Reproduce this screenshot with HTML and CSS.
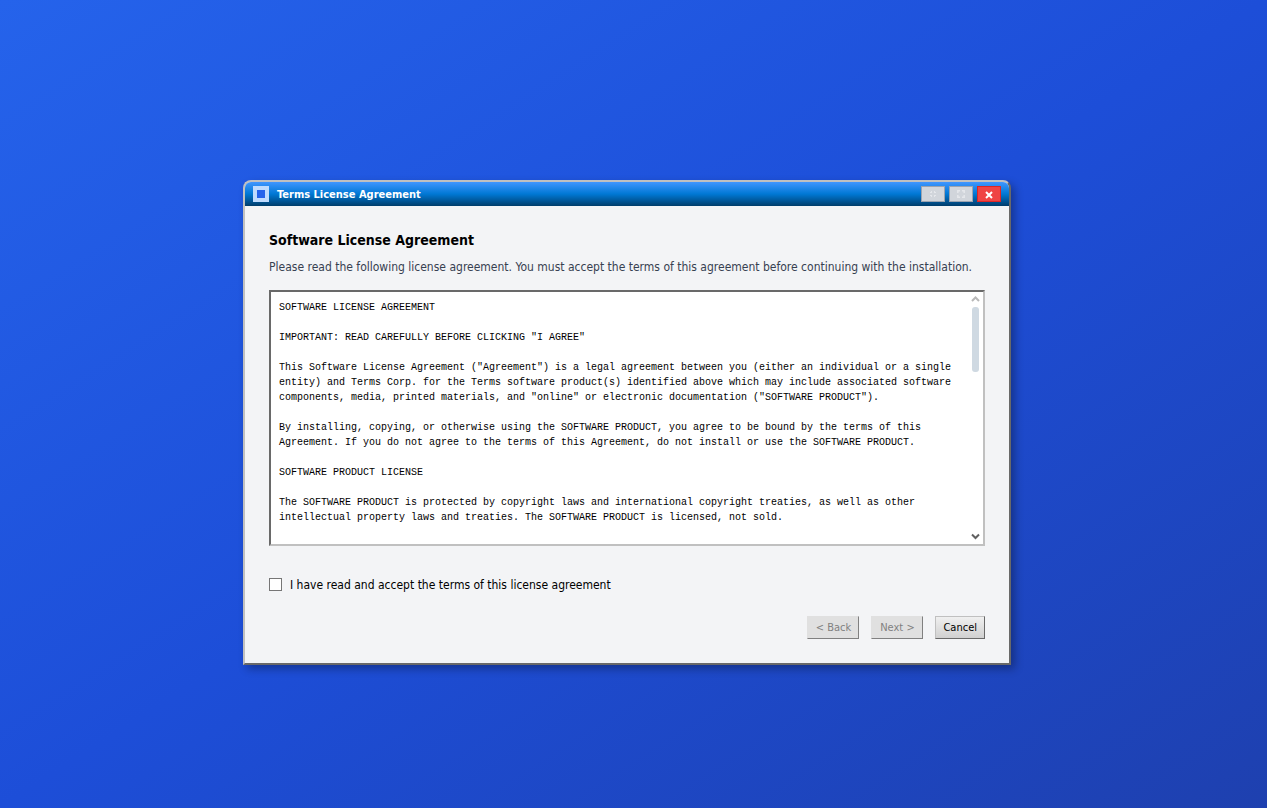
FILE: index.html
```
<!DOCTYPE html>
<html lang="en">
<head>
    <meta charset="UTF-8">
    <meta name="viewport" content="width=device-width, initial-scale=1.0">
    <title>Terms License Agreement</title>
    <link rel="stylesheet" href="styles.css">
</head>
<body>

    <main class="window">
        <header class="title-bar">
            <span class="app-icon"></span>
            <span class="window-title">Terms License Agreement</span>
            <div class="window-controls">
                <button type="button" aria-label="Minimize" disabled>
                    <svg width="6" height="6" viewBox="0 0 6 6" fill="none" stroke="#e5e7eb"><path d="M0 1.5h2M1.5 0v2M4.5 0v2M4 1.5h2M0 4.5h2M1.5 4v2M4.5 4v2M4 4.5h2"/></svg>
                </button>
                <button type="button" aria-label="Maximize" disabled>
                    <svg width="8" height="8" viewBox="0 0 8 8" fill="none" stroke="#e5e7eb" stroke-width="1.5"><path d="M.8 3V.8H3M5 .8h2.2V3M7.2 5v2.2H5M3 7.2H.8V5"/></svg>
                </button>
                <button type="button" class="close" aria-label="Close">
                    <svg width="8" height="8" viewBox="0 0 8 8" fill="none" stroke="#fff" stroke-width="2"><path d="M1 1l6 6M7 1L1 7"/></svg>
                </button>
            </div>
        </header>

        <div class="content">
            <h1>Software License Agreement</h1>
            <p class="intro">Please read the following license agreement. You must accept the terms of this agreement before continuing with the installation.</p>

            <div class="license-box">
                <div class="license-text" tabindex="0">
                    <p>SOFTWARE LICENSE AGREEMENT</p>
                    <p>IMPORTANT: READ CAREFULLY BEFORE CLICKING "I AGREE"</p>
                    <p>This Software License Agreement ("Agreement") is a legal agreement between you (either an individual or a single entity) and Terms Corp. for the Terms software product(s) identified above which may include associated software components, media, printed materials, and "online" or electronic documentation ("SOFTWARE PRODUCT").</p>
                    <p>By installing, copying, or otherwise using the SOFTWARE PRODUCT, you agree to be bound by the terms of this Agreement. If you do not agree to the terms of this Agreement, do not install or use the SOFTWARE PRODUCT.</p>
                    <p>SOFTWARE PRODUCT LICENSE</p>
                    <p>The SOFTWARE PRODUCT is protected by copyright laws and international copyright treaties, as well as other intellectual property laws and treaties. The SOFTWARE PRODUCT is licensed, not sold.</p>
                </div>
                <div class="scrollbar">
                    <svg width="9" height="7" viewBox="0 0 9 7" fill="none" stroke="#b8b8b8" stroke-width="2"><path d="M1 5L4.5 1.5 8 5"/></svg>
                    <span class="thumb"></span>
                    <svg class="down" width="9" height="7" viewBox="0 0 9 7" fill="none" stroke="#606060" stroke-width="2"><path d="M1 1.5L4.5 5 8 1.5"/></svg>
                </div>
            </div>

            <div class="accept-row">
                <input type="checkbox" id="accept">
                <label for="accept">I have read and accept the terms of this license agreement</label>
            </div>

            <div class="actions">
                <button type="button" disabled>&lt; Back</button>
                <button type="button" disabled>Next &gt;</button>
                <button type="button">Cancel</button>
            </div>
        </div>
    </main>

</body>
</html>
```
FILE: styles.css
```
* {
    box-sizing: border-box;
}
body {
    margin: 0;
    min-height: 100vh;
    font-family: Tahoma, "DejaVu Sans Condensed", sans-serif;
    font-size: 12px;
    color: #000;
    background: linear-gradient(to bottom right, #2563eb, #1d4ed8 50%, #1e40af);
}

/* Window on the desktop */
.window {
    position: absolute;
    left: 243px;
    top: 180px;
    width: 768px;
    border: 2px solid;
    border-color: #c0c0c0 #696969 #696969 #c0c0c0;
    border-radius: 8px 8px 0 0;
    background: #f3f4f6;
    box-shadow: 4px 4px 8px rgba(0, 0, 0, 0.3);
}
.title-bar {
    display: flex;
    align-items: center;
    height: 24px;
    padding: 0 8px;
    border-radius: 6px 6px 0 0;
    background: linear-gradient(to bottom, #4096ff 0%, #0078d4 50%, #003d6b 100%);
}
.app-icon {
    width: 16px;
    height: 16px;
    border: 4px solid #bfdbfe;
    background: #2563eb;
}
.window-title {
    flex: 1;
    margin-left: 8px;
    font-size: 11px;
    font-weight: bold;
    color: #fff;
}
.window-controls {
    display: flex;
    gap: 4px;
}
.window-controls button {
    display: flex;
    align-items: center;
    justify-content: center;
    width: 24px;
    height: 16px;
    padding: 0;
    border: 1px solid #9ca3af;
    background: #d1d5db;
}
.window-controls .close {
    padding-top: 2px;
    border-color: #dc2626;
    background: #ef4444;
}

.content {
    padding: 24px;
}
h1 {
    margin: 0 0 8px;
    font-size: 14px;
    line-height: 20px;
}
.intro {
    margin: 0 0 14px;
    line-height: 18px;
    color: #374151;
}

/* Sunken license area */
.license-box {
    display: flex;
    height: 256px;
    border: 2px solid;
    border-color: #696969 #c0c0c0 #c0c0c0 #696969;
    background: #fff;
}
.license-text {
    flex: 1;
    padding: 8px;
    overflow-y: auto;
    scrollbar-width: none;
    outline: none;
    font-family: "Courier New", "Liberation Mono", monospace;
    font-size: 10px;
    line-height: 15px;
}
.license-text p {
    margin: 0 0 15px;
}
.scrollbar {
    display: flex;
    flex-direction: column;
    align-items: center;
    width: 15px;
    padding: 4px 0;
}
.thumb {
    width: 7px;
    height: 65px;
    margin-top: 4px;
    border-radius: 3px;
    background: #cfd9e2;
}
.down {
    margin-top: auto;
}

.accept-row {
    display: flex;
    align-items: center;
    gap: 8px;
    height: 29px;
    margin: 24px 0 17px;
}
.accept-row input {
    appearance: none;
    width: 13px;
    height: 13px;
    margin: 0;
    border: 1px solid #767676;
    background: #fff;
}
.accept-row input:checked {
    background: #2563eb;
}

.actions {
    display: flex;
    justify-content: flex-end;
    gap: 12px;
}
.actions button {
    height: 23px;
    padding: 0 7px;
    border: 1px solid;
    border-color: #c0c0c0 #696969 #696969 #c0c0c0;
    background: linear-gradient(to bottom, #f0f0f0, #d0d0d0);
    font-family: inherit;
    font-size: 11px;
    color: #000;
}
.actions button:disabled {
    min-width: 52px;
    border-color: #e0e0e0 #808080 #808080 #e0e0e0;
    background: #e0e0e0;
    color: #808080;
}
```
